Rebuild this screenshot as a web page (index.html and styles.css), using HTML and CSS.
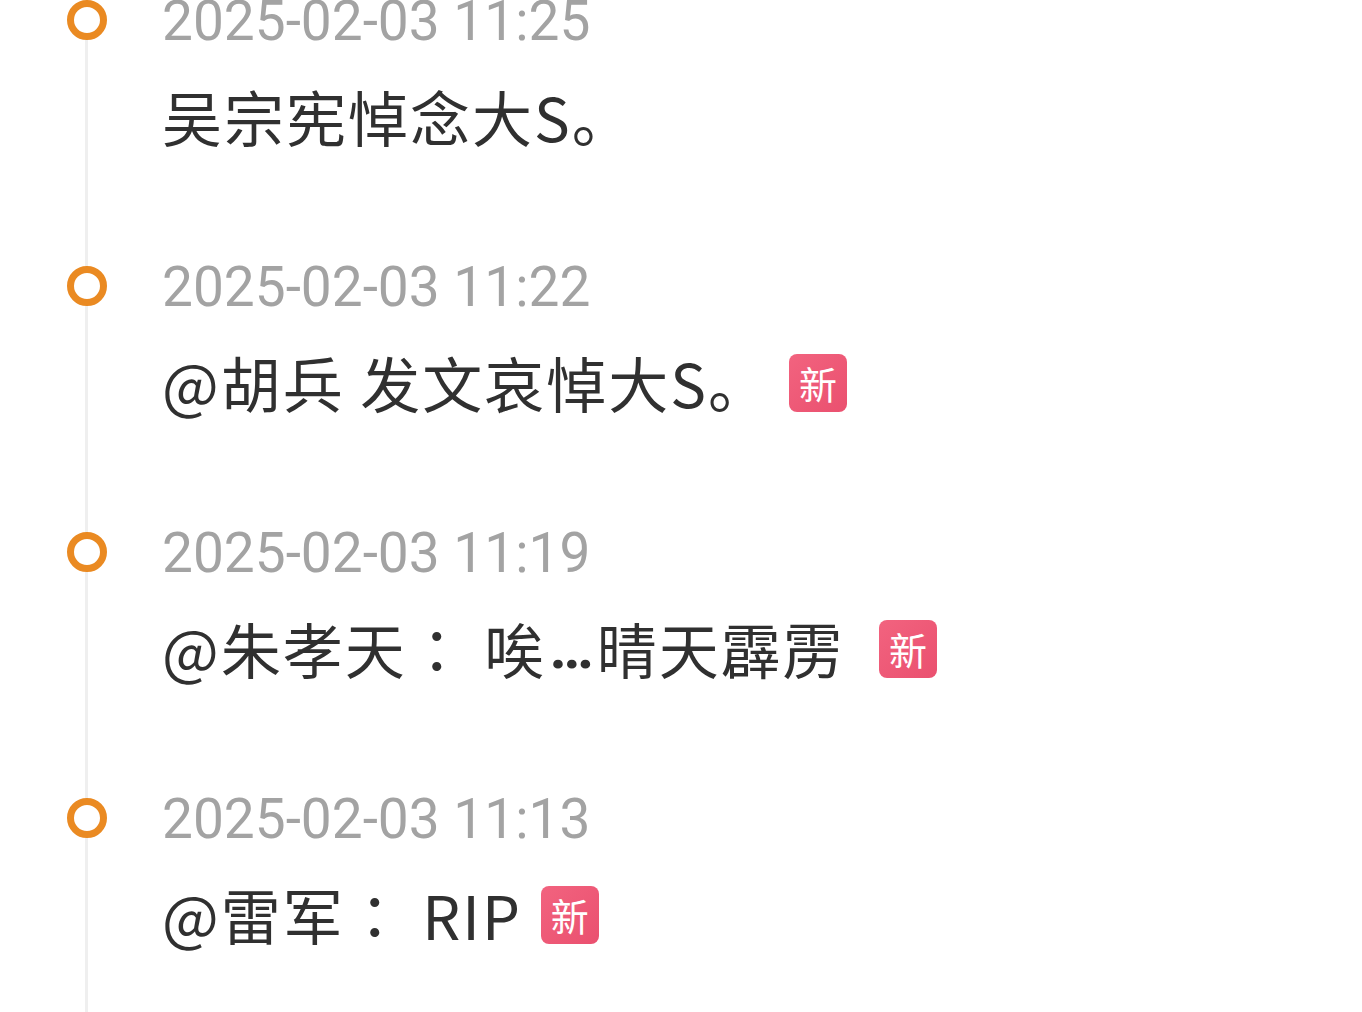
FILE: index.html
```html
<!DOCTYPE html>
<html lang="zh-CN">
<head>
    <meta charset="UTF-8">
    <meta name="viewport" content="width=device-width, initial-scale=1.0">
    <title>时间线</title>
    <link rel="stylesheet" href="styles.css">
</head>
<body>
    <!-- Timeline of updates -->
    <ul class="timeline">
        <li class="item">
            <span class="dot"></span>
            <div class="time">2025-02-03 11:25</div>
            <div class="text">吴宗宪悼念大S。</div>
        </li>
        <li class="item">
            <span class="dot"></span>
            <div class="time">2025-02-03 11:22</div>
            <div class="text">@胡兵 发文哀悼大S。<span class="badge">新</span></div>
        </li>
        <li class="item">
            <span class="dot"></span>
            <div class="time">2025-02-03 11:19</div>
            <div class="text">@朱孝天<span class="colon">：</span> 唉<span class="dots">…</span>晴天霹雳 <span class="badge">新</span></div>
        </li>
        <li class="item">
            <span class="dot"></span>
            <div class="time">2025-02-03 11:13</div>
            <div class="text">@雷军<span class="colon">：</span> RIP<span class="badge">新</span></div>
        </li>
    </ul>
</body>
</html>
```

FILE: styles.css
```css
body {
    margin: 0;
    background: #ffffff;
    font-family: "Noto Sans CJK SC", "Noto Sans", sans-serif;
    overflow: hidden;
}
.timeline {
    list-style: none;
    margin: -12px 0 0 85px;
    padding: 0 0 200px 74px;
    border-left: 3px solid #efefef;
}
.item {
    position: relative;
    padding-bottom: 98px;
}
.dot {
    position: absolute;
    left: -95px;
    top: 12px;
    width: 26px;
    height: 26px;
    border: 7px solid #ea8a22;
    border-radius: 50%;
    background: #ffffff;
}
.time {
    font-family: Roboto, "Liberation Sans", sans-serif;
    font-size: 55px;
    line-height: 66px;
    color: #a3a3a3;
}
.text {
    display: flex;
    align-items: center;
    margin-top: 22px;
    height: 80px;
    font-size: 60px;
    line-height: 80px;
    letter-spacing: 2px;
    color: #303030;
    white-space: pre;
}
.colon {
    font-family: "Noto Sans CJK TC", sans-serif;
}
.dots {
    font-family: Roboto, sans-serif;
    font-weight: 700;
    letter-spacing: 0;
    margin: 0 3px;
}
.badge {
    display: inline-flex;
    align-items: center;
    justify-content: center;
    width: 58px;
    height: 58px;
    margin-left: 19px;
    margin-top: 2px;
    border-radius: 8px;
    background: linear-gradient(135deg, #f2637f, #ea506f);
    color: #ffffff;
    font-size: 38px;
    line-height: 1;
    letter-spacing: 0;
}
```
